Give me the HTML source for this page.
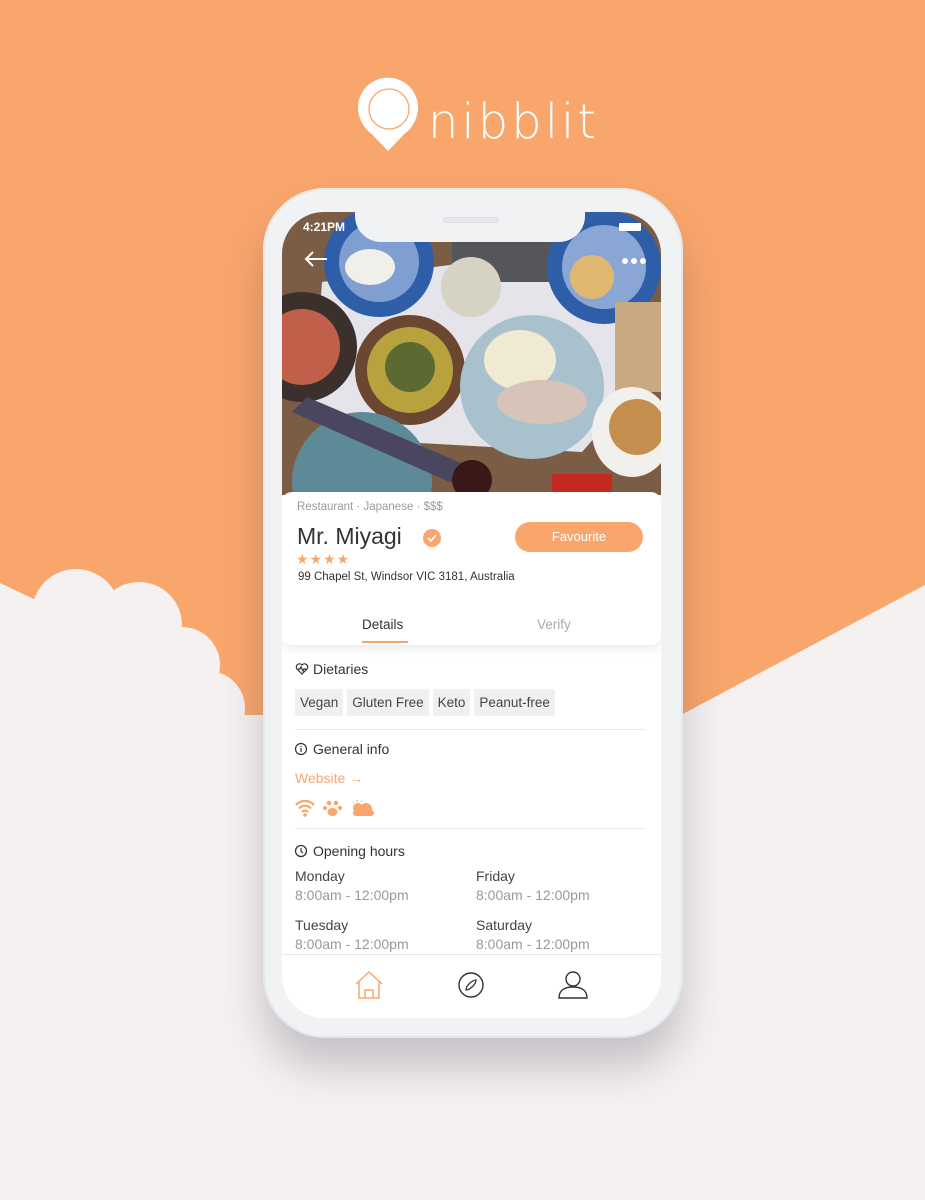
<!DOCTYPE html>
<html><head><meta charset="utf-8"><style>
*{margin:0;padding:0;box-sizing:border-box}
body{width:925px;height:1200px;position:relative;overflow:hidden;background:#f5f1f1;font-family:"Liberation Sans",sans-serif}
.abs{position:absolute}
.t{position:absolute;white-space:nowrap}
</style></head><body>
<svg class="abs" style="left:0;top:0" width="925" height="1200">
<polygon points="0,0 925,0 925,585 681,715 0,715" fill="#f9a66c"/>
<g fill="#f5f1f1">
<polygon points="0,583 40,602 76,590 139,610 175,650 210,690 245,715 245,1200 0,1200"/>
<circle cx="76" cy="613" r="44"/>
<circle cx="139" cy="625" r="43"/>
<circle cx="182" cy="665" r="38"/>
<circle cx="208" cy="708" r="37"/>
</g>
<!-- logo -->
<g>
<path d="M388 151 L366 128 A30 30 0 1 1 410 128 Z" fill="#fff"/>
<circle cx="388" cy="110" r="29" fill="#fff"/>
<circle cx="389" cy="109" r="20" fill="none" stroke="#f9a66c" stroke-width="1.3"/>
<circle cx="361" cy="129" r="4" fill="#f9a66c"/>
<circle cx="364" cy="136" r="3" fill="#f9a66c"/>
</g>
<text x="428" y="138" font-family="DejaVu Sans" font-size="48" font-weight="200" fill="#fff" letter-spacing="3">nibblit</text>
</svg>

<!-- phone -->
<div class="abs" style="left:263px;top:188px;width:420px;height:850px;border-radius:62px;background:#f1f2f4;box-shadow:0 30px 40px rgba(60,60,80,.25),inset 0 0 0 2px #e6e7ea"></div>
<div class="abs" style="left:282px;top:212px;width:379px;height:806px;border-radius:42px;background:#fff;overflow:hidden">
<svg class="abs" style="left:0;top:0" width="379" height="283">
<rect width="379" height="283" fill="#7b5c45"/>
<polygon points="40,70 340,30 379,150 300,240 120,230 30,200" fill="#e4e4ea"/>
<rect x="170" y="28" width="100" height="42" fill="#55565a"/>
<circle cx="97" cy="50" r="55" fill="#2f5ea8"/><circle cx="97" cy="50" r="40" fill="#7f9fd0"/>
<ellipse cx="88" cy="55" rx="25" ry="18" fill="#f0efe9"/>
<circle cx="322" cy="55" r="57" fill="#2f5ea8"/><circle cx="322" cy="55" r="42" fill="#8aa6d4"/>
<circle cx="310" cy="65" r="22" fill="#e0b870"/>
<circle cx="189" cy="75" r="30" fill="#d6d2c4"/>
<circle cx="20" cy="135" r="55" fill="#3b302b"/><circle cx="20" cy="135" r="38" fill="#c0604a"/>
<circle cx="128" cy="158" r="55" fill="#6b4630"/><circle cx="128" cy="158" r="43" fill="#b8a23e"/>
<circle cx="128" cy="155" r="25" fill="#5a6a30"/>
<circle cx="250" cy="175" r="72" fill="#a9c1cc"/>
<ellipse cx="238" cy="148" rx="36" ry="30" fill="#f1ead2"/>
<ellipse cx="260" cy="190" rx="45" ry="22" fill="#d6c4b8"/>
<rect x="333" y="90" width="46" height="90" fill="#c9a97f"/>
<circle cx="80" cy="270" r="70" fill="#5e8996"/>
<polygon points="10,200 25,185 200,260 190,280" fill="#4a4660"/>
<circle cx="190" cy="268" r="20" fill="#3a1818"/>
<ellipse cx="350" cy="220" rx="40" ry="45" fill="#f2f0ec"/>
<circle cx="355" cy="215" r="28" fill="#c48e4f"/>
<rect x="270" y="262" width="60" height="21" fill="#c52a20"/>
</svg>
<div class="abs" style="left:73px;top:-1px;width:230px;height:31px;background:#f1f2f4;border-radius:0 0 26px 26px"></div>
<div class="abs" style="left:161px;top:5px;width:56px;height:6px;border-radius:3px;background:#e6e7ea;border:1px solid #dcdde0"></div>
<div class="t" style="left:21px;top:8px;color:#fff;font-size:12px;font-weight:bold">4:21PM</div>
<div class="abs" style="left:337px;top:11px;width:22px;height:8px;background:#fff;border-radius:1px"></div>
<svg class="abs" style="left:22px;top:38px" width="24" height="18"><path d="M2 9H23M9 2L2 9L9 16" stroke="#fff" stroke-width="2" fill="none"/></svg>
<div class="abs" style="left:340px;top:46px;width:6px;height:6px;border-radius:3px;background:#fff;box-shadow:9px 0 #fff,18px 0 #fff"></div>
<div class="abs" style="left:0;top:280px;width:379px;height:153px;background:#fff;border-radius:10px;box-shadow:0 4px 10px rgba(0,0,0,.08)"></div>
<div class="t" style="left:15px;top:289px;font-size:11.5px;color:#9a9a9a">Restaurant · Japanese · $$$</div>
<div class="t" style="left:15px;top:311px;font-size:23px;color:#333">Mr. Miyagi</div>
<svg class="abs" style="left:141px;top:317px" width="18" height="18"><circle cx="9" cy="9" r="9" fill="#f9a66c"/><path d="M5 9l3 3 5-6" stroke="#fff" stroke-width="1.6" fill="none"/></svg>
<div class="abs" style="left:233px;top:310px;width:128px;height:30px;border-radius:15px;background:#f9a66c;color:#fff;font-size:13px;text-align:center;line-height:30px">Favourite</div>
<div class="t" style="left:14px;top:339px;font-size:14px;color:#f9a66c;letter-spacing:1px">★★★★</div>
<div class="t" style="left:16px;top:359px;font-size:11.5px;color:#333">99 Chapel St, Windsor VIC 3181, Australia</div>
<div class="t" style="left:80px;top:405px;font-size:13.5px;color:#333">Details</div>
<div class="abs" style="left:80px;top:429px;width:46px;height:2px;background:#f9a66c"></div>
<div class="t" style="left:255px;top:405px;font-size:13.5px;color:#aaa">Verify</div>
<svg class="abs" style="left:13px;top:450px" width="14" height="14"><path d="M7 12L2 7A3 3 0 0 1 7 3A3 3 0 0 1 12 7Z M3 7H5L6 5L8 9L9 7H11" stroke="#333" stroke-width="1.2" fill="none"/></svg>
<div class="t" style="left:31px;top:449px;font-size:14px;color:#333">Dietaries</div>
<div class="abs" style="left:13px;top:477px;font-size:13.5px;color:#444;display:flex;gap:4px">
<span style="background:#f0f0f0;padding:6px 5px;border-radius:2px">Vegan</span>
<span style="background:#f0f0f0;padding:6px 5px;border-radius:2px">Gluten Free</span>
<span style="background:#f0f0f0;padding:6px 5px;border-radius:2px">Keto</span>
<span style="background:#f0f0f0;padding:6px 5px;border-radius:2px">Peanut-free</span>
</div>
<div class="abs" style="left:13px;top:517px;width:351px;height:1px;background:#eaeaea"></div>
<svg class="abs" style="left:12px;top:530px" width="14" height="14"><circle cx="7" cy="7" r="5.5" stroke="#333" stroke-width="1.2" fill="none"/><path d="M7 6v4M7 4v1" stroke="#333" stroke-width="1.2"/></svg>
<div class="t" style="left:31px;top:529px;font-size:14px;color:#333">General info</div>
<div class="t" style="left:13px;top:558px;font-size:14px;color:#f9a66c">Website →</div>
<svg class="abs" style="left:13px;top:586px" width="90" height="20">
<g fill="none" stroke="#f9a66c" stroke-width="2.2"><path d="M1 7A12 12 0 0 1 19 7M4 10.5A8 8 0 0 1 16 10.5M7 14A4 4 0 0 1 13 14"/></g>
<circle cx="10" cy="17" r="1.8" fill="#f9a66c"/>
<g fill="#f9a66c"><circle cx="34" cy="5" r="2.3"/><circle cx="41" cy="5" r="2.3"/><circle cx="30" cy="10" r="2.1"/><circle cx="45" cy="10" r="2.1"/><ellipse cx="37.5" cy="14" rx="5" ry="4"/>
<circle cx="63" cy="10" r="5"/><circle cx="71" cy="11" r="6"/><rect x="58" y="12" width="21" height="6" rx="3"/></g>
<path d="M62 2v2M66 4l1-1M58 4l1 1" stroke="#f9a66c" stroke-width="1"/>
</svg>
<div class="abs" style="left:13px;top:616px;width:351px;height:1px;background:#eaeaea"></div>
<svg class="abs" style="left:12px;top:632px" width="14" height="14"><circle cx="7" cy="7" r="5.5" stroke="#333" stroke-width="1.3" fill="none"/><path d="M7 4v3.5l2 1.5" stroke="#333" stroke-width="1.2" fill="none"/></svg>
<div class="t" style="left:31px;top:631px;font-size:14px;color:#333">Opening hours</div>
<div class="t" style="left:13px;top:655px;font-size:14px;color:#444;line-height:19px">Monday<br><span style="color:#999">8:00am - 12:00pm</span></div>
<div class="t" style="left:194px;top:655px;font-size:14px;color:#444;line-height:19px">Friday<br><span style="color:#999">8:00am - 12:00pm</span></div>
<div class="t" style="left:13px;top:704px;font-size:14px;color:#444;line-height:19px">Tuesday<br><span style="color:#999">8:00am - 12:00pm</span></div>
<div class="t" style="left:194px;top:704px;font-size:14px;color:#444;line-height:19px">Saturday<br><span style="color:#999">8:00am - 12:00pm</span></div>
<div class="abs" style="left:0;top:742px;width:379px;height:64px;background:#fff;border-top:1.5px solid #e8e8e8"></div>
<svg class="abs" style="left:72px;top:758px" width="30" height="30"><path d="M2 14L15 2L28 14M5 11V28H25V11M11 28V20H19V28" stroke="#f9a66c" stroke-width="1.5" fill="none"/></svg>
<svg class="abs" style="left:176px;top:760px" width="28" height="28"><circle cx="13" cy="13" r="12" stroke="#333" stroke-width="1.4" fill="none"/><path d="M18 8C15 8 8 13 8 18C11 18 18 13 18 8Z" stroke="#333" stroke-width="1.3" fill="none"/></svg>
<svg class="abs" style="left:275px;top:758px" width="32" height="30"><circle cx="16" cy="9" r="7" stroke="#333" stroke-width="1.4" fill="none"/><path d="M2 28C2 20 8 17 16 17C24 17 30 20 30 28Z" stroke="#333" stroke-width="1.4" fill="none"/></svg>
</div>
</body></html>
